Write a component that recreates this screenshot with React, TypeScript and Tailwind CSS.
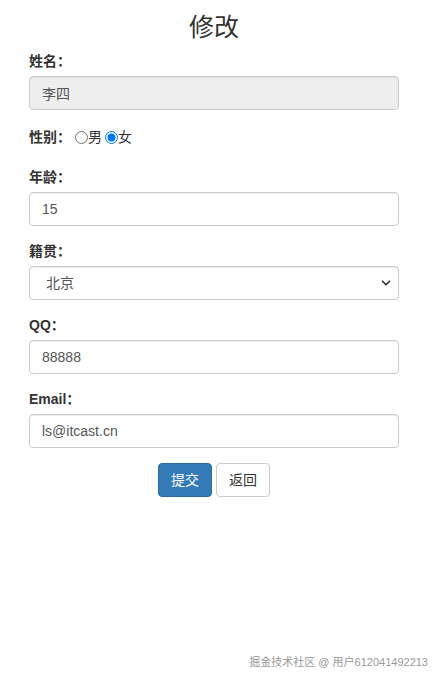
import { ChevronDown } from 'lucide-react';

const font = { fontFamily: '"Liberation Sans", "Noto Sans CJK SC", sans-serif' };

function Field({ label, children }: { label: string; children: React.ReactNode }) {
  return (
    <div className="mb-[15px]">
      <label className="block mb-[5px] text-sm leading-5 font-bold text-[#333]">{label}</label>
      {children}
    </div>
  );
}

const inputCls =
  'block w-full h-[34px] px-3 py-1.5 text-sm text-[#555] bg-white border border-[#ccc] rounded shadow-[inset_0_1px_1px_rgba(0,0,0,0.075)] outline-none';

export default function App() {
  return (
    <div className="h-[682px] flex flex-col bg-white text-[#333]" style={font}>
      <div className="w-[370px] ml-[29px]">
        <h3 className="pt-[14px] mb-[11px] text-[25px] leading-[26px] font-normal text-center">修改</h3>

        <Field label="姓名：">
          <input className={inputCls + ' !bg-[#eee]'} value="李四" readOnly />
        </Field>

        {/* 性别 */}
        <div className="mb-[15px] h-[27px] flex items-start pt-[2px] text-sm leading-5">
          <span className="font-bold mr-[4px]">性别：</span>
          <label className="flex items-center">
            <input type="radio" name="sex" className="m-0 w-[13px] h-[13px]" />
            <span>男</span>
          </label>
          <label className="flex items-center ml-[3px]">
            <input type="radio" name="sex" defaultChecked className="m-0 w-[13px] h-[13px] accent-[#0075ff]" />
            <span>女</span>
          </label>
        </div>

        <Field label="年龄：">
          <input className={inputCls} defaultValue="15" />
        </Field>

        <Field label="籍贯：">
          <div className="relative">
            <select className={inputCls + ' appearance-none pl-4'} defaultValue="北京">
              <option>北京</option>
              <option>上海</option>
              <option>广州</option>
            </select>
            <ChevronDown size={14} strokeWidth={3} className="absolute right-[6px] top-[10px] text-[#333]" />
          </div>
        </Field>

        <Field label="QQ：">
          <input className={inputCls} defaultValue="88888" />
        </Field>

        <Field label="Email：">
          <input className={inputCls} defaultValue="ls@itcast.cn" />
        </Field>

        <div className="flex justify-center gap-1">
          <button className="h-[34px] px-3 text-sm text-white bg-[#337ab7] border border-[#2e6da4] rounded">提交</button>
          <button className="h-[34px] px-3 text-sm text-[#333] bg-white border border-[#ccc] rounded">返回</button>
        </div>
      </div>

      <div className="mt-auto mb-[12px] pr-[13px] text-right text-[11px] text-[#999]">掘金技术社区 @ 用户612041492213</div>
    </div>
  );
}
